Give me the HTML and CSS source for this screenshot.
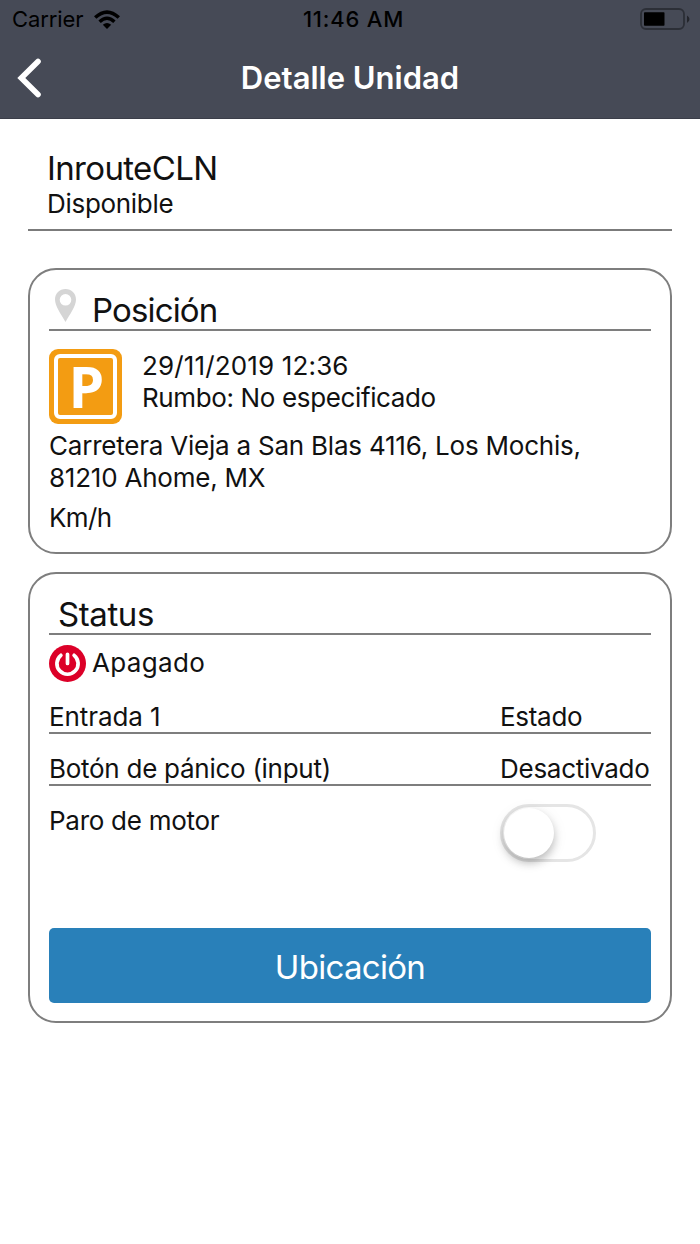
FILE: index.html
```html
<!DOCTYPE html>
<html lang="es">
<head>
    <meta charset="UTF-8">
    <meta name="viewport" content="width=device-width, initial-scale=1.0">
    <title>Detalle Unidad</title>
    <link rel="stylesheet" href="styles.css">
</head>
<body>
    <header class="header">
        <div class="status-bar">
            <div class="carrier">
                <span class="carrier-name">Carrier</span>
                <svg class="wifi" width="26" height="19" viewBox="0 0 26 19">
                    <path d="M0 6.3 Q13 -5.8 26 6.3 L23.6 8.8 Q13 -1 2.4 8.8 Z"/>
                    <path d="M4.4 10.6 Q13 2.6 21.6 10.6 L19.2 13 Q13 7.2 6.8 13 Z"/>
                    <path d="M8.8 14.8 Q13 11 17.2 14.8 L13 19 Z"/>
                </svg>
            </div>
            <span class="time">11:46 AM</span>
            <svg class="battery" width="50" height="22" viewBox="0 0 50 22">
                <rect x="1" y="1" width="43" height="20" rx="5" fill="none" stroke="#2c2f37" stroke-width="1.8"/>
                <rect x="4" y="4.3" width="20.5" height="13.5" rx="0.8"/>
                <path d="M47 7.5 Q49.5 9 49.5 11 Q49.5 13.5 47 15 Z" fill="#23252b"/>
            </svg>
        </div>
        <nav class="nav">
            <svg class="back" width="24" height="40" viewBox="0 0 24 40">
                <path d="M21 3.5 L4.3 20 L21 36.5" fill="none" stroke="#fff" stroke-width="5.6" stroke-linecap="round" stroke-linejoin="miter"/>
            </svg>
            <h1 class="nav-title">Detalle Unidad</h1>
        </nav>
    </header>

    <main class="content">
        <section class="unit">
            <h2 class="title unit-name">InrouteCLN</h2>
            <p class="unit-state">Disponible</p>
        </section>

        <section class="card position">
            <div class="card-head">
                <svg class="pin" width="21" height="33" viewBox="0 0 21 33">
                    <path fill="#d5d5d5" fill-rule="evenodd" d="M10.5 0 C4.5 0 0 4.6 0 10.4 C0 17 6 25 10.5 33 C15 25 21 17 21 10.4 C21 4.6 16.5 0 10.5 0 Z M10.5 5 A5.8 5.8 0 1 1 10.5 16.6 A5.8 5.8 0 1 1 10.5 5 Z"/>
                </svg>
                <h2 class="title position-title">Posición</h2>
            </div>
            <div class="report">
                <div class="parking"><span class="parking-sign">P</span></div>
                <div class="report-text">
                    <p class="date">29/11/2019 12:36</p>
                    <p class="heading">Rumbo: No especificado</p>
                </div>
            </div>
            <p class="address">Carretera Vieja a San Blas 4116, Los Mochis,<br>81210 Ahome, MX</p>
            <p class="speed">Km/h</p>
        </section>

        <section class="card status">
            <div class="card-head status-head">
                <h2 class="title status-title">Status</h2>
            </div>
            <div class="engine">
                <svg class="power" width="37" height="37" viewBox="0 0 38 38">
                    <circle cx="19" cy="19" r="19" fill="#dc0028"/>
                    <path d="M12.2 10.6 A10.9 10.9 0 1 0 25.8 10.6 M19 9.6 V19" fill="none" stroke="#fff" stroke-width="3.8" stroke-linecap="round"/>
                </svg>
                <span class="engine-state">Apagado</span>
            </div>
            <div class="row first">
                <span class="label entry">Entrada 1</span>
                <span class="value state">Estado</span>
            </div>
            <div class="row">
                <span class="label">Botón de pánico (input)</span>
                <span class="value">Desactivado</span>
            </div>
            <div class="row last">
                <span class="label">Paro de motor</span>
                <span class="value"><span class="switch"><span class="knob"></span></span></span>
            </div>
            <button class="button" type="button">Ubicación</button>
        </section>
    </main>
</body>
</html>
```

FILE: styles.css
```css
* {
    box-sizing: border-box;
}

body {
    margin: 0;
    background: #fff;
    color: #111;
    font-family: Inter, "Liberation Sans", sans-serif;
    font-size: 26px;
    line-height: 32px;
}

h1, h2, p {
    margin: 0;
    font-weight: 400;
    white-space: nowrap;
}

svg {
    display: block;
}

.header {
    height: 119px;
    background: #464a56;
    border-bottom: 1px solid #3b3e49;
}

.status-bar {
    display: grid;
    grid-template-columns: 1fr auto 1fr;
    align-items: center;
    height: 38px;
    padding: 0 10px 0 12px;
    color: #000;
    font-size: 22px;
}

.carrier {
    display: flex;
    align-items: center;
    gap: 11px;
}

.carrier-name {
    letter-spacing: -0.1px;
}

.time {
    margin-left: 5px;
    font-weight: 500;
    letter-spacing: 0.8px;
}

.battery {
    justify-self: end;
}

.nav {
    display: grid;
    grid-template-columns: 24px 1fr 24px;
    align-items: center;
    height: 80px;
    padding: 0 17px;
    color: #fff;
}

.nav-title {
    font-size: 31px;
    font-weight: 600;
    text-align: center;
}

.content {
    padding: 29px 28px 0;
}

.unit {
    height: 83px;
    padding-left: 19px;
    border-bottom: 2px solid #7b7b7b;
}

.unit-state {
    letter-spacing: -0.3px;
}

.title {
    font-size: 33px;
    line-height: 40px;
    letter-spacing: -0.65px;
}

.card {
    border: 2px solid #7e7e7e;
    border-radius: 28px;
    padding: 19px 19px 18px;
}

.position {
    height: 286px;
    margin-top: 37px;
}

.card-head {
    display: flex;
    height: 42px;
    gap: 16px;
    padding-left: 6px;
    border-bottom: 2px solid #7e7e7e;
}

.card-head .title {
    padding-top: 1px;
}

.position-title {
    letter-spacing: -0.85px;
}

.report {
    display: flex;
    gap: 20px;
    margin-top: 18px;
}

.report-text {
    padding-top: 1px;
}

.date {
    letter-spacing: 0.15px;
}

.heading {
    letter-spacing: -0.37px;
}

.parking {
    width: 73px;
    height: 75px;
    padding: 5px;
    border-radius: 9px;
    background: #f39c12;
}

.parking-sign {
    display: block;
    height: 65px;
    padding-left: 2px;
    border: 4px solid #fff;
    border-radius: 6px;
    color: #fff;
    font-family: "Open Sans", sans-serif;
    font-size: 57px;
    font-weight: 700;
    line-height: 57px;
    text-align: center;
}

.address {
    margin-top: 6px;
    letter-spacing: -0.22px;
}

.speed {
    margin-top: 8px;
    letter-spacing: -0.6px;
}

.status {
    height: 451px;
    margin-top: 18px;
}

.status-head {
    padding-left: 9px;
}

.status-title {
    letter-spacing: -0.4px;
}

.engine {
    display: flex;
    align-items: center;
    gap: 6px;
    height: 56px;
}

.engine-state {
    letter-spacing: 0.35px;
}

.row {
    display: flex;
    justify-content: space-between;
    height: 52px;
    padding-top: 19px;
    border-bottom: 2px solid #7e7e7e;
    letter-spacing: -0.27px;
}

.first {
    height: 43px;
    padding-top: 10px;
    letter-spacing: -0.1px;
}

.state {
    letter-spacing: -0.3px;
}

.value {
    width: 151px;
}

.switch {
    display: block;
    width: 96px;
    height: 58px;
    padding: 1px;
    border: 3px solid #e5e5e5;
    border-radius: 29px;
}

.knob {
    display: block;
    width: 50px;
    height: 50px;
    border-radius: 50%;
    background: #fff;
    box-shadow: 0 5px 8px rgba(0, 0, 0, 0.22), 0 3px 16px rgba(0, 0, 0, 0.08);
}

.last {
    height: 142px;
    padding-top: 18px;
    border: none;
}

.last .label {
    padding-top: 1px;
}

.button {
    display: block;
    width: 100%;
    height: 75px;
    padding: 3px 0 0;
    border: none;
    border-radius: 5px;
    background: #2980b9;
    color: #fff;
    font-family: inherit;
    font-size: 33px;
    letter-spacing: -0.7px;
}
```
